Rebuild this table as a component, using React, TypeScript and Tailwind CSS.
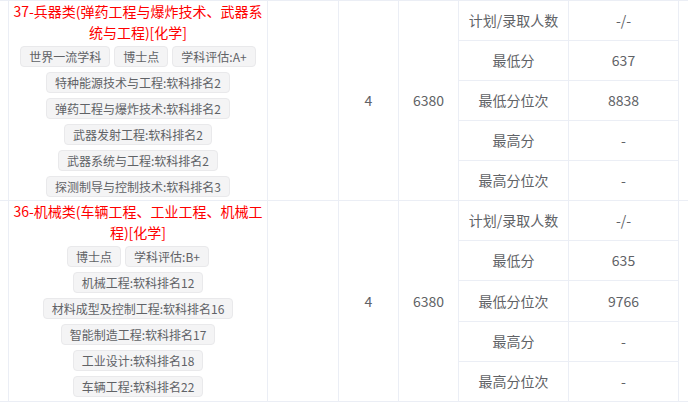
import React from 'react';

type Block = {
  titleLines: string[];
  tags: string[];
  rank: string;
  score: string;
  stats: [string, string][];
};

const blocks: Block[] = [
  {
    titleLines: ['37-兵器类(弹药工程与爆炸技术、武器系', '统与工程)[化学]'],
    tags: [
      '世界一流学科',
      '博士点',
      '学科评估:A+',
      '特种能源技术与工程:软科排名2',
      '弹药工程与爆炸技术:软科排名2',
      '武器发射工程:软科排名2',
      '武器系统与工程:软科排名2',
      '探测制导与控制技术:软科排名3',
    ],
    rank: '4',
    score: '6380',
    stats: [
      ['计划/录取人数', '-/-'],
      ['最低分', '637'],
      ['最低分位次', '8838'],
      ['最高分', '-'],
      ['最高分位次', '-'],
    ],
  },
  {
    titleLines: ['36-机械类(车辆工程、工业工程、机械工', '程)[化学]'],
    tags: [
      '博士点',
      '学科评估:B+',
      '机械工程:软科排名12',
      '材料成型及控制工程:软科排名16',
      '智能制造工程:软科排名17',
      '工业设计:软科排名18',
      '车辆工程:软科排名22',
    ],
    rank: '4',
    score: '6380',
    stats: [
      ['计划/录取人数', '-/-'],
      ['最低分', '635'],
      ['最低分位次', '9766'],
      ['最高分', '-'],
      ['最高分位次', '-'],
    ],
  },
];

const Tag = ({ text }: { text: string }) => (
  <span className="inline-block h-[21px] px-2 text-[12px] leading-[19px] whitespace-nowrap rounded-[4px] border border-[#e9e9eb] bg-[#f4f4f5] text-[#606266]">
    {text}
  </span>
);

const BlockRow = ({ block, height }: { block: Block; height: string }) => (
  <div className={`flex border-b border-[#ebeef5] ${height}`}>
    <div className="w-[9px] shrink-0 border-r border-[#ebeef5]" />

    {/* Major name + tags */}
    <div className="w-[259px] shrink-0 border-r border-[#ebeef5] px-[4px]">
      <div className="text-center text-[14px] leading-[21px] text-[#f00]">
        {block.titleLines.map((line) => (
          <div key={line} className="whitespace-nowrap">
            {line}
          </div>
        ))}
      </div>
      <div className="mt-[3px] flex flex-wrap justify-center gap-x-[4px] gap-y-[5px]">
        {block.tags.map((t) => (
          <Tag key={t} text={t} />
        ))}
      </div>
    </div>

    <div className="w-[71px] shrink-0 border-r border-[#ebeef5]" />

    <div className="w-[60px] shrink-0 border-r border-[#ebeef5] flex items-center justify-center">
      {block.rank}
    </div>
    <div className="w-[60px] shrink-0 border-r border-[#ebeef5] flex items-center justify-center">
      {block.score}
    </div>

    {/* Stats sub-table */}
    <div className="w-[220px] shrink-0 flex flex-col">
      {block.stats.map(([label, value], i) => (
        <div
          key={label}
          className={`flex flex-1 ${i < block.stats.length - 1 ? 'border-b border-[#ebeef5]' : ''}`}
        >
          <div className="w-[110px] border-r border-[#ebeef5] flex items-center justify-center whitespace-nowrap">
            {label}
          </div>
          <div className="w-[110px] border-r border-[#ebeef5] flex items-center justify-center">
            {value}
          </div>
        </div>
      ))}
    </div>

    <div className="flex-1" />
  </div>
);

export default function App() {
  return (
    <div
      className="w-[688px] h-[405px] overflow-hidden bg-white text-[14px] text-[#606266]"
      style={{ fontFamily: '"Noto Sans CJK SC", "Noto Sans", sans-serif' }}
    >
      <div className="border-t border-[#ebeef5]">
        <BlockRow block={blocks[0]} height="h-[200px]" />
        <BlockRow block={blocks[1]} height="h-[201px]" />
      </div>
    </div>
  );
}
